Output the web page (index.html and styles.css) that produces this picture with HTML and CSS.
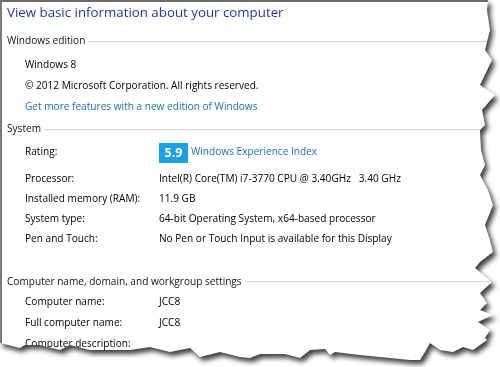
FILE: index.html
```html
<!DOCTYPE html>
<html lang="en">
<head>
    <meta charset="UTF-8">
    <title>System</title>
    <link rel="stylesheet" href="styles.css">
</head>
<body>
    <div class="paper">
        <div class="sheet">
            <h1 class="title">View basic information about your computer</h1>

            <section class="group edition">
                <h2 class="group-head">Windows edition</h2>
                <p class="line">Windows 8</p>
                <p class="line">© 2012 Microsoft Corporation. All rights reserved.</p>
                <p class="line"><a class="link" href="#">Get more features with a new edition of Windows</a></p>
            </section>

            <section class="group system">
                <h2 class="group-head">System</h2>
                <div class="row rating">
                    <span class="label">Rating:</span>
                    <span class="value"><span class="badge">5.9</span><a class="link" href="#">Windows Experience Index</a></span>
                </div>
                <div class="row">
                    <span class="label">Processor:</span>
                    <span class="value">Intel(R) Core(TM) i7-3770 CPU @ 3.40GHz &nbsp; 3.40 GHz</span>
                </div>
                <div class="row">
                    <span class="label">Installed memory (RAM):</span>
                    <span class="value">11.9 GB</span>
                </div>
                <div class="row">
                    <span class="label">System type:</span>
                    <span class="value">64-bit Operating System, x64-based processor</span>
                </div>
                <div class="row">
                    <span class="label">Pen and Touch:</span>
                    <span class="value">No Pen or Touch Input is available for this Display</span>
                </div>
            </section>

            <section class="group computer">
                <h2 class="group-head">Computer name, domain, and workgroup settings</h2>
                <div class="row">
                    <span class="label">Computer name:</span>
                    <span class="value">JCC8</span>
                </div>
                <div class="row">
                    <span class="label">Full computer name:</span>
                    <span class="value">JCC8</span>
                </div>
                <div class="row">
                    <span class="label">Computer description:</span>
                    <span class="value"></span>
                </div>
            </section>
        </div>
    </div>
</body>
</html>
```

FILE: styles.css
```css
* {
    margin: 0;
    padding: 0;
    box-sizing: border-box;
}

body {
    width: 500px;
    height: 367px;
    overflow: hidden;
    background: #fff;
    font-family: 'Open Sans', 'Liberation Sans', sans-serif;
    font-size: 10.1px;
    color: #000;
}

/* torn paper look */
.paper {
    width: 500px;
    height: 367px;
    filter: drop-shadow(3px 4px 2.5px rgba(0, 0, 0, 0.75));
}

.sheet {
    width: 500px;
    height: 367px;
    background: #fff;
    border-top: 2px solid #6a6a6a;
    border-left: 2px solid #7a7a7a;
    padding-left: 5px;
    clip-path: polygon(0 0, 488px 0, 487px 10px, 490px 30px, 485px 50px, 492px 60px, 480px 85px, 495px 95px, 482px 110px, 485px 125px, 480px 130px, 481px 150px, 485px 165px, 480px 175px, 488px 190px, 493px 205px, 485px 225px, 490px 240px, 493px 252px, 480px 262px, 475px 268px, 492px 282px, 480px 293px, 487px 303px, 480px 310px, 493px 315px, 478px 322px, 490px 330px, 485px 338px, 490px 343px, 487px 340px, 473px 350px, 463px 347px, 453px 352px, 440px 350px, 430px 343px, 425px 352px, 420px 360px, 410px 360px, 380px 357px, 360px 355px, 335px 352px, 330px 355px, 325px 349px, 310px 350px, 300px 358px, 285px 354px, 260px 354px, 250px 358px, 240px 357px, 220px 352px, 200px 357px, 190px 348px, 170px 352px, 150px 347px, 130px 350px, 90px 350px, 70px 345px, 60px 350px, 40px 345px, 25px 345px, 20px 348px, 0 343px);
}

.title {
    font-size: 13.3px;
    font-weight: normal;
    color: #2337a0;
    line-height: 20px;
}

.group-head {
    display: flex;
    align-items: center;
    gap: 3px;
    font-size: 10.1px;
    font-weight: normal;
    color: #111;
    height: 20px;
}

.group-head::after {
    content: "";
    flex: 1;
    border-top: 1px solid #d4d4d4;
    margin-top: 2px;
}

.edition {
    margin-top: 8px;
}

.edition .line {
    padding-left: 18px;
    height: 21px;
    line-height: 21px;
}

.edition .line:first-of-type {
    margin-top: 4px;
}

.link {
    color: #1f6cc4;
    text-decoration: none;
}

.system {
    margin-top: 1px;
}

.row {
    display: flex;
    align-items: center;
    padding-left: 18px;
    height: 20px;
}

.label {
    width: 134px;
}

.value {
    display: flex;
    align-items: center;
}

.row.rating {
    height: 24px;
    margin-top: 1px;
    margin-bottom: 5px;
}

.badge {
    display: inline-block;
    background: #1ba1e2;
    color: #fff;
    font-weight: bold;
    font-size: 12.5px;
    width: 29px;
    height: 20px;
    line-height: 20px;
    text-align: center;
    margin-right: 3px;
    margin-top: 3px;
}

.computer {
    margin-top: 23px;
}

.computer .group-head {
    height: 19px;
}

.computer .row {
    height: 21px;
}
```
